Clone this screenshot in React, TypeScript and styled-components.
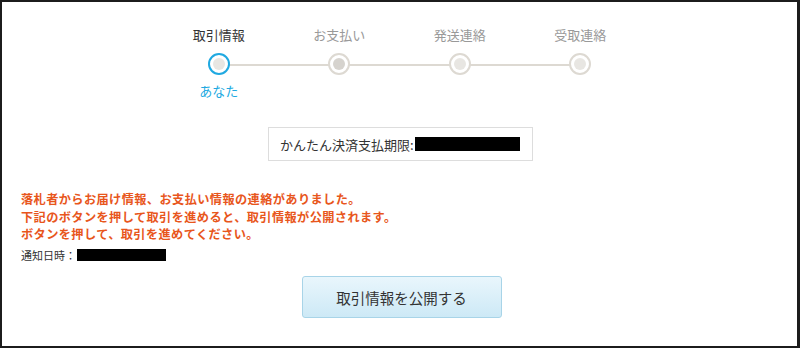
import styled, { createGlobalStyle } from "styled-components";

const GlobalStyle = createGlobalStyle`
  html, body {
    margin: 0;
    padding: 0;
    background: #fff;
  }
  body {
    font-family: "Noto Sans CJK JP", "Liberation Sans", sans-serif;
    color: #333;
  }
`;

interface StepData {
  label: string;
  sub?: string;
  active?: boolean;
  dark?: boolean;
}

const steps: StepData[] = [
  { label: "取引情報", sub: "あなた", active: true },
  { label: "お支払い", dark: true },
  { label: "発送連絡" },
  { label: "受取連絡" }
];

const App: React.FC = () => {
  return (
    <>
      <GlobalStyle />
      <Frame>
        <Stepper>
          {steps.map((s, i) => (
            <Step key={s.label} $first={i === 0}>
              <StepLabel $active={s.active}>{s.label}</StepLabel>
              <Dot $active={s.active} $dark={s.dark} />
              <StepSub>{s.sub}</StepSub>
            </Step>
          ))}
        </Stepper>

        <DeadlineRow>
          <DeadlineBox>
            かんたん決済支払期限:
            <Redacted $w={106} $h={14} />
          </DeadlineBox>
        </DeadlineRow>

        <Notice>
          <NoticeLine>落札者からお届け情報、お支払い情報の連絡がありました。</NoticeLine>
          <NoticeLine>下記のボタンを押して取引を進めると、取引情報が公開されます。</NoticeLine>
          <NoticeLine>ボタンを押して、取引を進めてください。</NoticeLine>
        </Notice>
        <NotifyDate>
          通知日時：
          <Redacted $w={89} $h={12} />
        </NotifyDate>

        <ButtonRow>
          <PublishButton type="button">取引情報を公開する</PublishButton>
        </ButtonRow>
      </Frame>
    </>
  );
};

const Frame = styled.div`
  box-sizing: border-box;
  width: 800px;
  height: 348px;
  border-style: solid;
  border-color: #1c1c1c;
  border-width: 2px 3px 2px 2px;
  overflow: hidden;
`;

const Stepper = styled.div`
  display: flex;
  justify-content: center;
  padding: 24px 0 0 0;
`;

const Step = styled.div<{ $first?: boolean }>`
  position: relative;
  width: 120.5px;
  display: flex;
  flex-direction: column;
  align-items: center;

  &::before {
    content: "";
    display: ${({ $first }) => ($first ? "none" : "block")};
    position: absolute;
    left: -50%;
    right: 50%;
    top: 38px;
    height: 2px;
    background: #ddd9d2;
  }
`;

const StepLabel = styled.div<{ $active?: boolean }>`
  font-size: 13px;
  line-height: 18px;
  color: ${({ $active }) => ($active ? "#333" : "#999")};
`;

const Dot = styled.div<{ $active?: boolean; $dark?: boolean }>`
  position: relative;
  z-index: 1;
  box-sizing: border-box;
  width: 22px;
  height: 22px;
  margin-top: 9px;
  border-radius: 50%;
  border: 2px solid ${({ $active }) => ($active ? "#20a9e1" : "#ddd9d2")};
  background: #fff;
  display: flex;
  align-items: center;
  justify-content: center;

  &::after {
    content: "";
    width: 12px;
    height: 12px;
    border-radius: 50%;
    background: ${({ $dark }) => ($dark ? "#d6d3ce" : "#e8e6e2")};
  }
`;

const StepSub = styled.div`
  min-height: 18px;
  margin-top: 7px;
  font-size: 13px;
  line-height: 18px;
  color: #20a9e1;
`;

const DeadlineRow = styled.div`
  display: flex;
  justify-content: center;
  padding: 27px 0 0 2px;
`;

const DeadlineBox = styled.div`
  box-sizing: border-box;
  width: 265px;
  height: 34px;
  padding: 0 12px 0 11px;
  border: 1px solid #ddd;
  display: flex;
  align-items: center;
  font-size: 13px;
  color: #333;
  white-space: nowrap;
`;

const Redacted = styled.span<{ $w: number; $h: number }>`
  display: inline-block;
  width: ${({ $w }) => $w}px;
  height: ${({ $h }) => $h}px;
  background: #000;
  margin-left: 1px;
`;

const Notice = styled.div`
  margin-top: 30px;
  padding-left: 19px;
  display: flex;
  flex-direction: column;
  font-size: 12.2px;
  letter-spacing: 0.4px;
  font-weight: bold;
  color: #e8561c;
`;

const NoticeLine = styled.div`
  height: 17.7px;
  line-height: 17.7px;
  white-space: nowrap;
`;

const NotifyDate = styled.div`
  display: flex;
  align-items: center;
  padding-left: 19px;
  margin-top: 3px;
  font-size: 11px;
  line-height: 16px;
  color: #333;
`;

const ButtonRow = styled.div`
  display: flex;
  justify-content: center;
  padding: 13px 0 0 4px;
`;

const PublishButton = styled.button`
  box-sizing: border-box;
  width: 200px;
  height: 42px;
  border: 1px solid #a8d4e8;
  border-radius: 3px;
  background: linear-gradient(to bottom, #e9f6fc 0%, #cde9f6 100%);
  font-family: "Noto Sans CJK JP", "Liberation Sans", sans-serif;
  font-size: 14.5px;
  color: #333;
  cursor: pointer;
`;

export default App;
